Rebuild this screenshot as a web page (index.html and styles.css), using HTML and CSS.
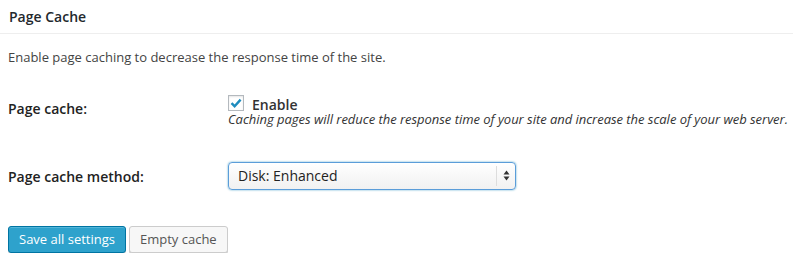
FILE: index.html
```html
<!DOCTYPE html>
<html lang="en">
  <head>
    <meta charset="utf-8">
    <link rel="stylesheet" href="styles.css">
  </head>
  <body>
    <div class="postbox">
      <h3 class="hndle">Page Cache</h3>

      <div class="inside">
        <p class="intro">Enable page caching to decrease the response time of the site.</p>

        <div class="form-row first">
          <div class="row-label">Page cache:</div>
          <div class="row-field">
            <label class="check-line">
              <span class="checkbox">
                <svg width="12" height="10" viewBox="0 0 12 10">
                  <path d="M1.5 5.2 L4.6 8.2 L10.6 1.6" fill="none" stroke="#1e8cbe" stroke-width="2.4"/>
                </svg>
              </span>
              <span class="check-text">Enable</span>
            </label>
            <div class="description">Caching pages will reduce the response time of your site and increase the scale of your web server.</div>
          </div>
        </div>

        <div class="form-row second">
          <div class="row-label">Page cache method:</div>
          <div class="row-field">
            <span class="select-wrap">
              <select class="method-select">
                <option>Disk: Enhanced</option>
              </select>
              <span class="select-arrows">
                <svg width="7" height="11" viewBox="0 0 7 11">
                  <path d="M3.5 0.5 L6.5 4.5 L0.5 4.5 Z" fill="#333"/>
                  <path d="M3.5 10.5 L6.5 6.5 L0.5 6.5 Z" fill="#333"/>
                </svg>
              </span>
            </span>
          </div>
        </div>

        <div class="actions">
          <button class="button button-primary">Save all settings</button>
          <button class="button">Empty cache</button>
        </div>
      </div>
    </div>
  </body>
</html>
```

FILE: styles.css
```css
body {
  margin: 0;
  background: #fff;
  font-family: "Open Sans", "Noto Sans", sans-serif;
  font-size: 13px;
  color: #444;
}

.hndle {
  margin: 0;
  padding: 0 9px;
  height: 33px;
  line-height: 34px;
  font-size: 14px;
  font-weight: 600;
  color: #23282d;
  border-bottom: 1px solid #eee;
}

.inside {
  padding: 0 8px;
}

.intro {
  margin: 14px 0 0;
  line-height: 19.5px;
}

.form-row {
  display: grid;
  grid-template-columns: 220px 1fr;
}
.form-row.first {
  margin-top: 26px;
}
.form-row.second {
  margin-top: 36px;
}

.row-label {
  font-size: 14px;
  font-weight: 600;
  line-height: 19px;
  color: #222;
}
.first .row-label {
  padding-top: 5px;
}
.second .row-label {
  padding-top: 5px;
}

.check-line {
  display: flex;
  gap: 8px;
  height: 18px;
}
.checkbox {
  display: flex;
  align-items: center;
  justify-content: center;
  box-sizing: border-box;
  width: 16px;
  height: 16px;
  margin-top: 1px;
  border: 1px solid #b4b9be;
  background: #fff;
  box-shadow: inset 0 1px 2px rgba(0, 0, 0, 0.1);
}
.check-text {
  padding-top: 4px;
  font-size: 14px;
  font-weight: 600;
  line-height: 14px;
  color: #333;
}

.description {
  font-style: italic;
  line-height: 14px;
  letter-spacing: -0.03px;
  white-space: nowrap;
  color: #333;
}

.select-wrap {
  position: relative;
  display: inline-block;
  width: 288px;
  height: 28px;
}
.method-select {
  appearance: none;
  box-sizing: border-box;
  width: 100%;
  height: 28px;
  margin: 0;
  padding: 0 30px 0 9px;
  font-family: "Open Sans", sans-serif;
  font-size: 14px;
  color: #222;
  border: 1px solid #5b9dd9;
  border-radius: 4px;
  background: linear-gradient(#fff, #f1f1f1);
  box-shadow: 0 0 2px rgba(30, 140, 190, 0.8);
  outline: none;
}
.select-arrows {
  position: absolute;
  top: 4px;
  right: 1px;
  bottom: 4px;
  width: 18px;
  display: flex;
  align-items: center;
  justify-content: center;
  border-left: 1px solid #ddd;
}

.actions {
  display: flex;
  gap: 3px;
  margin-top: 36px;
}
.button {
  height: 27px;
  margin: 0;
  padding: 0 10px;
  font-family: "Open Sans", sans-serif;
  font-size: 13px;
  color: #555;
  border: 1px solid #ccc;
  border-radius: 3px;
  background: #f7f7f7;
  box-shadow: 0 1px 0 #ccc;
}
.button-primary {
  color: #fff;
  border-color: #0074a2;
  background: #2ea2cc;
  box-shadow: inset 0 1px 0 rgba(120, 200, 230, 0.5), 0 1px 0 rgba(0, 0, 0, 0.15);
}
```
